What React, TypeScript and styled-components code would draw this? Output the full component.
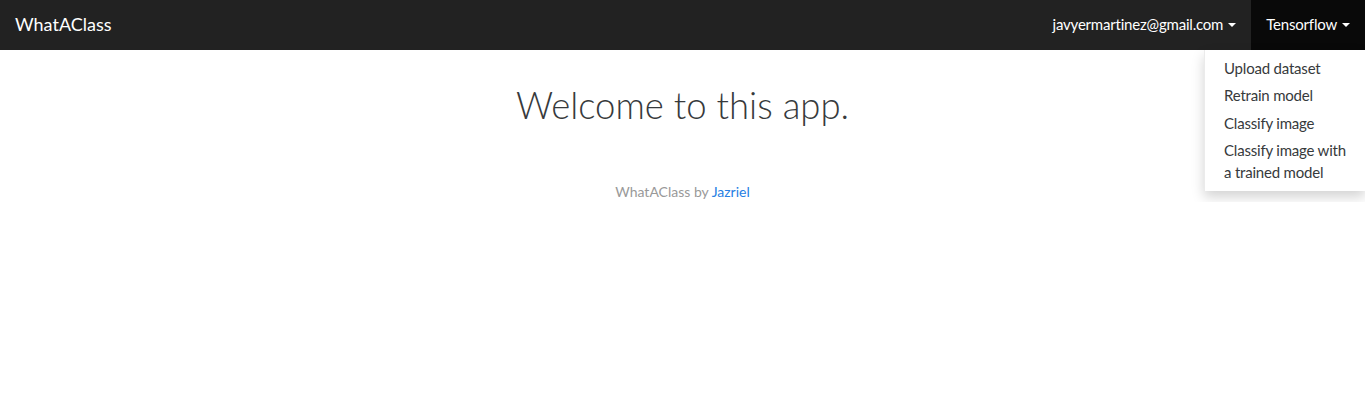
import React from "react";
import styled, { createGlobalStyle } from "styled-components";

const Global = createGlobalStyle`
  html, body { margin: 0; padding: 0; background: #fff; }
  body {
    font-family: "Lato", "Liberation Sans", sans-serif;
    font-size: 15px;
    line-height: 1.42857;
    color: #373a3c;
  }
  * { box-sizing: border-box; }
`;

const Navbar = styled.nav`
  height: 50px;
  background: #222222;
  display: flex;
  align-items: stretch;
  justify-content: space-between;
`;

const Brand = styled.a`
  display: flex;
  align-items: center;
  padding: 0 15px;
  font-size: 18px;
  color: #fff;
  text-decoration: none;
`;

const NavRight = styled.ul`
  list-style: none;
  margin: 0;
  padding: 0;
  display: flex;
  align-items: stretch;
`;

const NavItem = styled.li<{ $open?: boolean }>`
  position: relative;
  display: flex;
  background: ${(p) => (p.$open ? "#090909" : "transparent")};
`;

const NavLink = styled.a`
  display: flex;
  align-items: center;
  padding: 0 15px;
  color: #fff;
  text-decoration: none;
  font-size: 15px;
  letter-spacing: -0.2px;
`;

const Caret = styled.span`
  display: inline-block;
  width: 0;
  height: 0;
  margin-left: 5px;
  border-top: 4px solid #fff;
  border-left: 4px solid transparent;
  border-right: 4px solid transparent;
`;

const Menu = styled.ul`
  position: absolute;
  top: 50px;
  right: 0;
  width: 161px;
  margin: 0;
  padding: 5px 0;
  list-style: none;
  background: #fff;
  box-shadow: 0 6px 12px rgba(0, 0, 0, 0.175);
  border-left: 1px solid rgba(0, 0, 0, 0.08);
  z-index: 10;
`;

const MenuLink = styled.a`
  display: block;
  padding: 3px 14px 3px 19px;
  color: #373a3c;
  text-decoration: none;
  font-size: 15px;
  line-height: 1.42857;
  letter-spacing: -0.2px;
`;

const Main = styled.main`
  display: flex;
  flex-direction: column;
  align-items: center;
  padding-top: 35px;
`;

const Title = styled.h1`
  margin: 0;
  font-size: 36.5px;
  font-weight: 300;
  line-height: 1.1;
  color: #373a3c;
`;

const Footer = styled.p`
  margin: 57px 0 0;
  font-size: 14px;
  color: #999999;
`;

const Link = styled.a`
  color: #2780e3;
  text-decoration: none;
`;

const items = ["Upload dataset", "Retrain model", "Classify image", "Classify image with a trained model"];

export default function App() {
  return (
    <>
      <Global />
      <Navbar>
        <Brand href="#">WhatAClass</Brand>
        <NavRight>
          <NavItem>
            <NavLink href="#">
              javyermartinez@gmail.com <Caret />
            </NavLink>
          </NavItem>
          <NavItem $open>
            <NavLink href="#">
              Tensorflow <Caret />
            </NavLink>
            <Menu>
              {items.map((t) => (
                <li key={t}>
                  <MenuLink href="#">{t}</MenuLink>
                </li>
              ))}
            </Menu>
          </NavItem>
        </NavRight>
      </Navbar>
      <Main>
        <Title>Welcome to this app.</Title>
        <Footer>
          WhatAClass by <Link href="#">Jazriel</Link>
        </Footer>
      </Main>
    </>
  );
}
